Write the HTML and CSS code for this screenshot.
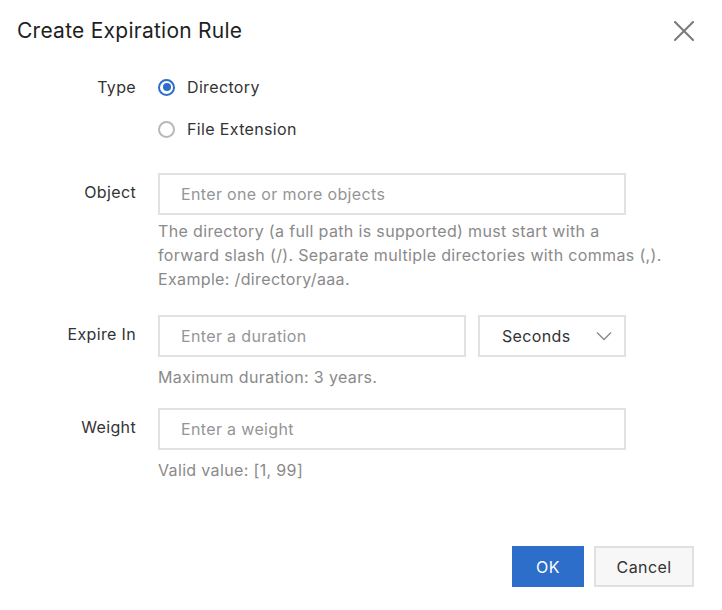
FILE: index.html
```html
<!DOCTYPE html>
<html lang="en">
<head>
<meta charset="utf-8">
<title>Create Expiration Rule</title>
<link rel="stylesheet" href="styles.css">
</head>
<body>
<div class="dialog">
  <header class="dialog-header">
    <h1 class="dialog-title">Create Expiration Rule</h1>
    <button class="close-btn" aria-label="Close">
      <svg width="20" height="20" viewBox="0 0 20 20"><path d="M1 1 L19 19 M19 1 L1 19" stroke="#7a7a7a" stroke-width="2" fill="none" stroke-linecap="square"/></svg>
    </button>
  </header>

  <form class="form">
    <div class="row row-type">
      <div class="label">Type</div>
      <div class="radios">
        <label class="radio"><span class="radio-dot checked"></span><span>Directory</span></label>
        <label class="radio"><span class="radio-dot"></span><span>File Extension</span></label>
      </div>
    </div>

    <div class="row row-object">
      <div class="label label-input">Object</div>
      <div class="field">
        <div class="input"><span class="placeholder">Enter one or more objects</span></div>
        <div class="help help-object">The directory (a full path is supported) must start with a<br>forward slash (/). Separate multiple directories with commas (,).<br>Example: /directory/aaa.</div>
      </div>
    </div>

    <div class="row row-expire">
      <div class="label label-input">Expire In</div>
      <div class="field">
        <div class="duration">
          <div class="input input-duration"><span class="placeholder">Enter a duration</span></div>
          <div class="input select"><span class="select-value">Seconds</span>
            <svg class="chevron" width="16" height="10" viewBox="0 0 16 10"><polyline points="1,1.5 8,8.5 15,1.5" stroke="#8a8a8a" stroke-width="1.5" fill="none"/></svg>
          </div>
        </div>
        <div class="help">Maximum duration: 3 years.</div>
      </div>
    </div>

    <div class="row row-weight">
      <div class="label label-input">Weight</div>
      <div class="field">
        <div class="input"><span class="placeholder">Enter a weight</span></div>
        <div class="help">Valid value: [1, 99]</div>
      </div>
    </div>
  </form>

  <footer class="dialog-footer">
    <button class="btn btn-primary" type="button">OK</button>
    <button class="btn btn-default" type="button">Cancel</button>
  </footer>
</div>
</body>
</html>
```

FILE: styles.css
```css
html, body {
  margin: 0;
  padding: 0;
  background: #ffffff;
}

body {
  font-family: Inter, "Noto Sans", "Liberation Sans", sans-serif;
  color: #333333;
  font-size: 16px;
  letter-spacing: 0.35px;
}

.dialog {
  width: 722px;
  height: 610px;
  box-sizing: border-box;
}

.dialog-header {
  display: flex;
  justify-content: space-between;
  align-items: center;
  padding: 19px 28px 0 17px;
}

.dialog-title {
  margin: 0;
  font-size: 21px;
  line-height: 24px;
  font-weight: 400;
  letter-spacing: 0.25px;
  color: #1f1f1f;
}

.close-btn {
  border: 0;
  background: none;
  padding: 0;
  width: 20px;
  height: 20px;
  display: flex;
  cursor: pointer;
}

.form {
  padding-top: 32px;
}

.row {
  display: grid;
  grid-template-columns: 136px 468px;
  column-gap: 22px;
  align-items: start;
}

.label {
  text-align: right;
  line-height: 24px;
  color: #333333;
}

.label-input {
  padding-top: 7px;
}

.radios {
  display: flex;
  flex-direction: column;
  gap: 18px;
}

.radio {
  display: flex;
  align-items: center;
  gap: 12px;
  line-height: 24px;
  color: #333333;
}

.radio-dot {
  width: 17px;
  height: 17px;
  box-sizing: border-box;
  border: 2px solid #b8b8b8;
  border-radius: 50%;
  position: relative;
  flex: none;
}

.radio-dot.checked {
  border-color: #2d6ecb;
}

.radio-dot.checked::after {
  content: "";
  position: absolute;
  left: 2.5px;
  top: 2.5px;
  width: 8px;
  height: 8px;
  border-radius: 50%;
  background: #2d6ecb;
}

.row-object {
  margin-top: 32px;
}

.row-expire {
  margin-top: 24px;
}

.row-weight {
  margin-top: 19px;
}

.input {
  height: 42px;
  box-sizing: border-box;
  border: 2px solid #e1e1e1;
  padding: 0 21px;
  display: flex;
  align-items: center;
  background: #ffffff;
}

.placeholder {
  color: #959595;
}

.duration {
  display: flex;
  gap: 12px;
}

.input-duration {
  width: 308px;
}

.select {
  width: 148px;
  padding: 0 12px 0 22px;
  justify-content: space-between;
}

.select-value {
  color: #333333;
}

.chevron {
  display: block;
}

.help {
  margin-top: 8px;
  line-height: 24px;
  color: #8a8a8a;
  white-space: nowrap;
}

.help-object {
  margin-top: 4px;
}

.dialog-footer {
  display: flex;
  justify-content: flex-end;
  gap: 10px;
  padding-right: 28px;
  margin-top: 64px;
}

.btn {
  height: 41px;
  box-sizing: border-box;
  font-family: inherit;
  font-size: 16px;
  letter-spacing: 0.4px;
  padding: 0;
  cursor: pointer;
}

.btn-primary {
  width: 72px;
  border: 0;
  background: #2d6ecb;
  color: #ffffff;
}

.btn-default {
  width: 100px;
  border: 2px solid #e0e0e0;
  background: #f7f7f7;
  color: #333333;
}
```
